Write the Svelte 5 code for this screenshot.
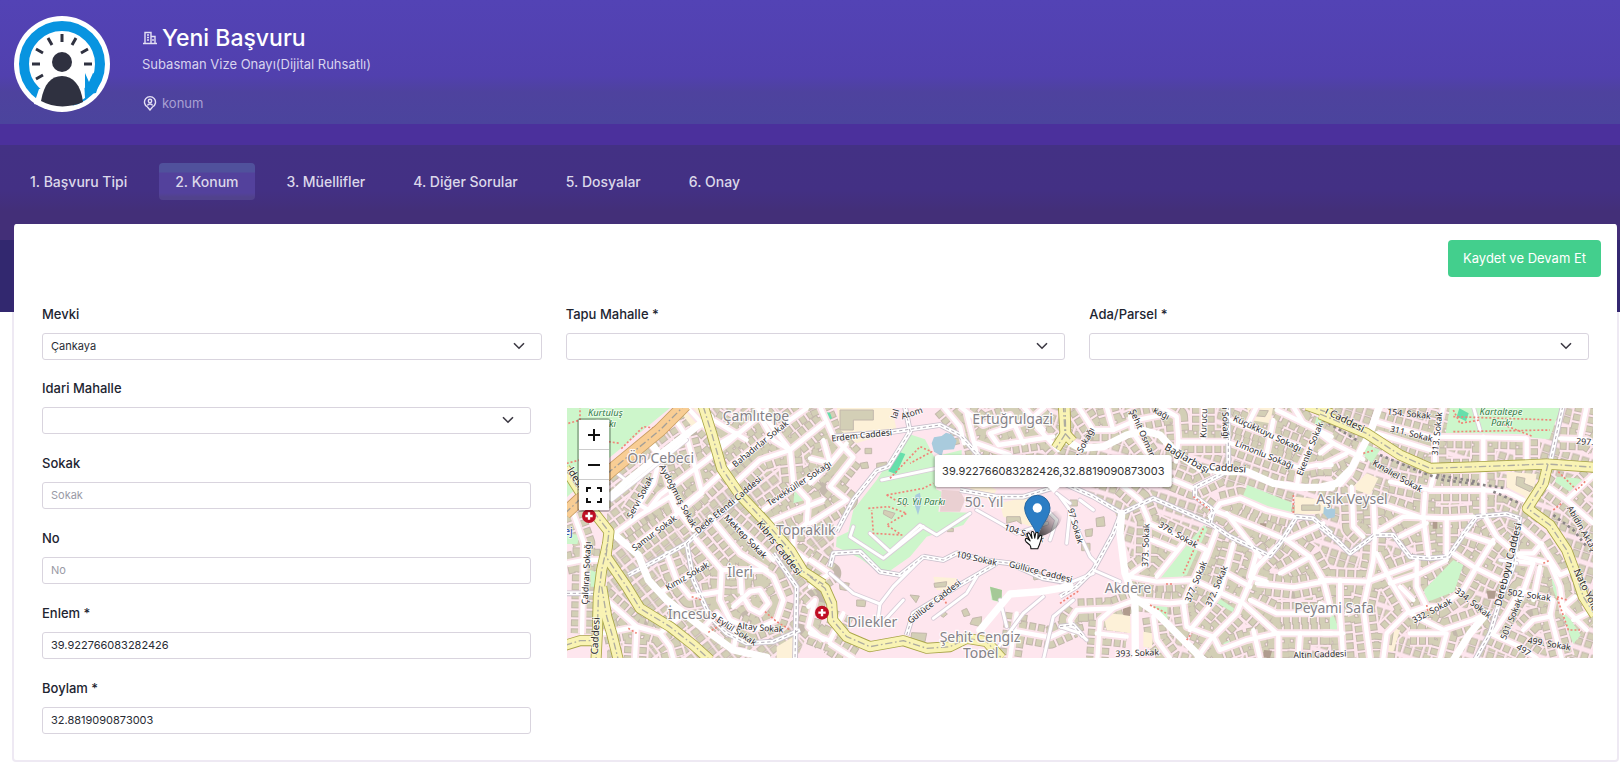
<script lang="ts">
  const tabs = ['1. Başvuru Tipi', '2. Konum', '3. Müellifler', '4. Diğer Sorular', '5. Dosyalar', '6. Onay'];
  let activeTab = $state(1);

  let lat = $state('39.922766083282426');
  let lng = $state('32.8819090873003');
  let street = $state('');
  let doorNo = $state('');

  const topFields = [
    { id: 'mevki', label: 'Mevki', value: 'Çankaya' },
    { id: 'tapu', label: 'Tapu Mahalle *', value: '' },
    { id: 'ada', label: 'Ada/Parsel *', value: '' }
  ];

  type Label = [text: string, x: number, y: number, angle: number];
  type Tile = {
    x: number;
    parks: string[];
    sand: string[];
    streets: string[];
    lanes: string[];
    avenues: string[];
    main: string[];
    dashed: string[];
    trails: string[];
    names: Label[];
    roads: Label[];
    places: Label[];
  };

  // the map is kept as vertical slices, three units to a pixel
  const tiles: Tile[] = [
    {
      x: -21,
      parks: ['20,20 335,20 150,172 20,292', '712,255 735,300 700,310 705,262', '90,510 120,520 115,560 92,560', '20,400 60,405 52,432 20,432'],
      sand: ['375,20 430,20 445,60 400,85 372,50', '650,740 700,710 700,775 650,775'],
      streets: [
        '340,50 380,110 425,275', '350,335 430,270 490,215 560,160 690,60 740,25', '610,330 720,250 780,215',
        '530,245 600,180 690,150 790,70', '600,50 640,120 690,150 700,250 745,300 740,370 700,400 700,450 740,480',
        '450,350 540,460 620,510', '400,410 485,510', '320,460 350,540 390,590 480,575', '305,575 370,535 440,490',
        '485,510 480,600 510,660 580,690 650,660 670,600 640,530 610,510 485,510',
        '520,620 570,575 600,570 625,610 600,640 570,625 555,600', '540,510 545,580', '130,590 230,680 300,700 330,740 340,775',
        '20,490 70,480 130,480', '40,340 72,430 66,700', '130,700 230,680 225,775', '300,170 280,250 215,345',
        '240,315 265,330 300,285 440,180 560,80 620,30', '310,200 345,320 400,390', '165,400 240,345 330,290 350,335',
        '620,370 690,340 790,300', '220,440 340,350 425,280', '380,20 480,130 530,100', '590,20 690,150',
        '430,685 470,640 530,700 520,750', '500,350 600,440 640,480', '460,60 560,120', '300,700 360,650', '745,620 765,600 745,680 790,720'
      ],
      lanes: ['165,215 210,250', '155,300 250,225 380,120'],
      avenues: ['265,120 300,165', '450,50 390,95 300,165 200,245 150,290', '165,405 235,465 265,540 320,600 430,685 520,750 620,772'],
      main: [
        '430,20 455,100 485,205 540,285 620,370 690,450 730,515 790,553',
        '100,335 147,395 138,470 200,560 240,625 330,680 400,735 450,780',
        '143,430 125,510 115,590 112,700 108,780', '125,560 140,650 155,700 175,780', '15,736 60,722 112,722', '15,205 60,275'
      ],
      dashed: ['205,525 300,475 380,430 450,365 560,280', '380,430 400,540 450,650 500,700 560,730 640,725 720,690', '640,460 710,560 705,775', '20,580 130,580'],
      trails: ['20,190 60,180 110,120 180,130', '330,90 250,80 180,150', '25,70 60,60 60,20', '445,650 490,670 440,700', '615,635 650,665 690,690', '395,590 425,600', '205,685 230,700'],
      names: [
        ['Bahadırlar Sokak', 606, 138, -39], ['Tevekküller Sokağı', 722, 258, -33], ['Servi Sokak', 248, 296, -62],
        ['Aydoğmuş Sokak', 346, 292, 62], ['Samur Sokak', 288, 406, -37], ['Dede Efendi Caddesi', 510, 322, -40],
        ['Mektep Sokak', 550, 416, 46], ['Kımız Sokak', 386, 536, -30], ['Altay Sokak', 600, 692, 5],
        ['9 Eylül Sokak', 516, 695, 33], ['Çaldıran Sokağı', 88, 520, -87]
      ],
      roads: [['Kıbrıs Caddesi', 650, 450, 52], ['Caddesi', 116, 708, -87], ['ldesi', 38, 238, 58]],
      places: [['Ön Cebeci', 302, 188, 0], ['Çamlıtepe', 588, 63, 0], ['İleri', 540, 530, 0], ['İncesu', 388, 658, 0]]
    },
    {
      x: 729,
      parks: [
        '290,100 345,118 372,170 455,150 455,172 378,180 378,268 395,275 385,335 487,338 460,375 350,410 300,470 240,512 205,515 150,475 78,440 80,412 115,395 130,330 200,240',
        '540,560 575,570 575,608 545,600'
      ],
      sand: ['80,20 245,20 260,90 140,130 90,90', '570,310 650,290 720,340 690,390 580,350', '370,530 440,535 430,575 380,570', '500,240 560,270 540,300 470,280'],
      streets: [
        '30,20 70,110 130,172 60,260 110,300 0,370', '0,175 60,190 110,130', '400,20 450,80 462,130', '450,20 520,75 600,45 640,130',
        '705,20 660,60 540,100 565,135 730,110', '680,80 745,150', '0,700 60,722 100,640', '0,480 60,520 0,560',
        '600,690 720,712 790,680', '620,640 600,775', '500,130 600,165', '0,250 60,190 40,120', '130,775 60,730', '640,20 700,90', '470,40 500,160'
      ],
      lanes: [
        '60,520 130,580 210,612 250,560 340,470', '210,612 205,650', '280,600 220,665', '370,655 470,580 500,530',
        '700,780 730,650 790,600', '500,330 580,375 620,400 710,370', '740,280 780,310', '570,600 590,680', '720,420 740,360 700,320',
        '180,400 240,455 330,375 380,405 480,340', '215,240 380,205', '130,380 120,410 220,475 340,380', '540,775 640,640 700,590'
      ],
      avenues: ['510,690 600,582 690,575 780,560'],
      main: ['0,530 45,565 65,610 68,660 110,710 180,740 280,722 350,745 420,740 470,715 530,725 575,775', '765,15 767,100 738,145'],
      dashed: [
        '70,110 250,95 390,75 450,105 500,160 540,200', '80,395 130,300 200,212 235,200 300,95 285,20',
        '340,470 400,480 440,460 520,480 600,490 700,535 790,550', '290,705 310,640 440,560 560,490',
        '60,500 70,460 150,455 210,515 270,525 340,470', '450,270 560,290 640,290 740,260'
      ],
      trails: ['240,235 330,140 365,155 300,190', '230,285 340,265 370,250', '175,325 235,320 290,340 230,375 275,405 190,400 185,330', '230,285 290,320', '400,595 412,615'],
      names: [
        ['Erdem Caddesi', 156, 115, -6], ['Atom', 308, 48, -18], ['104 Sokak', 640, 408, 18],
        ['109 Sokak', 498, 484, 12], ['Güllüce Caddesi', 690, 524, 14], ['Güllüce Caddesi', 378, 612, -38], ['lal', 264, 44, -75]
      ],
      roads: [],
      places: [['Topraklık', -13, 406, 0], ['50. Yıl', 522, 322, 0], ['Ertuğrulgazi', 608, 71, 0], ['Dilekler', 187, 680, 0], ['Şehit Cengiz', 510, 725, 0], ['Topel', 512, 774, 0]]
    },
    {
      x: 1479,
      parks: ['562,255 695,308 693,350 548,290', '432,375 442,388 380,525 300,552 285,545', '270,612 322,615 322,665', '470,590 522,625 518,637 465,605', '770,50 785,60 780,90 762,80', '490,730 510,720 500,745'],
      sand: ['130,640 210,645 212,700 140,690', '560,20 640,20 630,70 570,60', '705,290 800,300 800,340 705,345', '250,695 280,700 275,745 250,740'],
      streets: [
        '55,20 100,90 160,90 230,60 330,40', '140,20 160,90', '210,50 220,100 270,170', '300,20 350,50 355,120 348,185',
        '355,125 500,125 610,165 720,205 770,195 815,195', '430,20 430,120', '510,60 560,80 720,140', '650,30 815,110', '640,60 620,160',
        '780,80 720,200 710,260', '185,255 240,300 265,360 260,490 210,525', '265,370 330,400 440,450 410,520 370,610 380,680 460,710',
        '275,420 350,450', '370,430 290,530', '210,530 290,545 400,540 550,610 650,700 815,700', '230,600 330,610 380,605',
        '470,390 440,470 400,550', '520,430 480,580 390,690', '650,440 590,500 530,640 450,720 410,775', '590,460 570,530 620,545',
        '450,350 480,310 540,295 620,330 700,350', '460,330 560,370 680,420 750,470 790,540 810,620', '680,420 790,370',
        '40,700 30,660 50,630 160,625 225,600', '160,625 120,660 112,775', '110,700 200,710', '570,600 650,640 815,640',
        '590,550 700,562 815,540', '655,700 655,775', '720,700 715,775', '580,690 600,775', '460,710 480,750 560,720 650,700',
        '340,240 400,265 480,225', '500,520 570,560', '280,650 290,720 330,775', '500,340 600,470', '750,470 660,520', '700,20 730,70', '590,20 560,80'
      ],
      lanes: ['0,290 30,330 20,430', '60,300 100,330', '30,340 90,470 110,490', '100,510 180,545', '0,680 60,700 80,720', '0,560 100,520'],
      avenues: [
        '0,110 60,145 130,140 200,105 250,92 300,105 350,160 420,205 500,215 560,215 640,250 720,262 815,262',
        '185,340 180,400 195,520 225,600 226,780', '225,595 290,640 410,760 430,780'
      ],
      main: ['10,15 15,100 38,125', '740,15 815,42'],
      dashed: [
        '0,245 100,290 185,340 280,295 360,330 450,370 510,410 630,468 660,430 710,350 760,355 815,400',
        '185,335 160,400 100,510 50,560 0,590', '450,370 460,330 405,290 405,262 500,215', '505,20 505,200', '0,680 40,675 70,710'
      ],
      trails: ['430,385 370,520', '400,290 450,330', '700,285 700,345', '318,552 342,552', '380,720 395,700', '0,610 60,570', '270,615 320,640'],
      names: [
        ['Küçükkuyu Sokağı', 618, 108, 25], ['Limonlu Sokağı', 610, 172, 22], ['Ekenler Sokak', 758, 150, -68],
        ['Kurucu', 440, 70, -88], ['ı Sokağı', 488, 70, 88], ['Şehit Osman', 240, 104, 66], ['ı Sokağı', 82, 130, -62],
        ['376. Sokak', 350, 412, 30], ['373. Sokak', 266, 436, -88], ['377. Sokak', 416, 548, -67],
        ['372. Sokak', 478, 562, -67], ['97 Sokak', 38, 380, 74], ['393. Sokak', 232, 768, -2], ['kağı', 300, 48, 28],
        ['Altın Caddesi', 780, 772, -2]
      ],
      roads: [['Bağlarbaşı', 376, 184, 30], ['Caddesi', 502, 214, 4]],
      places: [['Akdere', 204, 580, 0], ['Peyami Safa', 822, 640, 0], ['Aşık Veysel', 876, 311, 0]]
    },
    {
      x: 2259,
      parks: [
        '390,20 722,20 688,118 600,110 375,110', '400,480 430,495 402,575 320,607 312,570',
        '688,490 715,530 740,640 782,705 760,732 700,570', '710,230 770,235 805,245 750,275 705,245',
        '130,130 180,150 155,190 130,165', '40,645 62,700 30,690 30,650'
      ],
      sand: ['560,215 650,222 640,280 620,300 560,262', '140,220 175,235 150,285 95,265', '205,680 240,690 220,755 190,750'],
      streets: [
        '130,130 90,220 60,255', '170,65 220,80 330,110 500,112 620,115 620,180', '330,270 345,210 345,130 370,20',
        '210,245 330,270 480,270 560,275 610,300', '310,350 315,280', '40,130 100,160 130,178', '0,200 80,160', '95,260 100,380 130,410',
        '160,300 165,400 160,480 130,620 150,775', '165,400 250,350 380,355 460,350', '490,110 490,340 530,410 600,470 690,490 720,560 730,640',
        '310,350 325,470', '380,355 380,470', '150,300 310,355', '0,540 140,545 290,490', '170,460 210,540 270,640 370,690 460,660 500,640',
        '210,550 300,520 380,480', '290,480 290,560 320,620 260,640 200,700 190,775', '400,460 460,500 560,550',
        '520,420 470,500 430,570 360,620 320,620', '560,480 640,490 600,600', '660,500 640,600', '520,700 560,640 600,570 700,600',
        '600,380 660,430 720,525 755,510', '600,460 640,460 665,430', '670,250 740,300 820,370', '740,300 820,225', '720,115 800,118 825,135',
        '800,20 780,115', '700,600 690,650 640,660 610,690', '690,640 725,775', '510,700 600,740 650,775', '60,540 60,640 70,775',
        '270,700 380,700 360,775', '765,590 730,620 800,690', '820,630 760,660', '430,400 520,430', '240,410 320,370', '80,640 130,620',
        '0,610 60,640', '240,560 280,600', '0,100 40,130 0,160', '170,100 330,150', '345,210 490,210', '10,700 70,700'
      ],
      lanes: ['540,480 590,490', '460,20 480,90'],
      avenues: ['0,262 50,250 95,205 150,100 178,20', '500,640 450,700 400,780'],
      main: ['0,42 140,100 240,165 330,205 480,200 680,192 825,202', '684,192 670,250 622,325 690,375 740,450 770,530 790,590 825,645'],
      dashed: [
        '0,380 50,420 90,460 165,405 220,405 270,470 330,475 385,470 440,390 470,350 560,342 600,355',
        '600,350 580,500 540,600 510,700 465,780', '728,20 690,190'
      ],
      trails: ['400,50 700,60', '400,95 690,90', '540,70 640,110', '715,215 770,270 800,240', '700,330 725,310', '670,490 690,480', '740,600 710,590 745,690 780,690', '320,615 325,640', '130,160 165,150', '400,30 420,70 480,60'],
      names: [
        ['154. Sokak', 266, 50, 6], ['311. Sokak', 272, 110, 14], ['313. Sokak', 360, 102, -84],
        ['Kınalıel Sokak', 228, 236, 30], ['297.', 794, 134, 4], ['Abidin Aktaş', 778, 390, 60],
        ['502. Sokak', 626, 594, 8], ['501. Sokak', 582, 660, -68], ['499. Sokak', 686, 740, 10],
        ['497', 606, 758, 32], ['332. Sokak', 340, 640, -28], ['334. Sokak', 454, 616, 38]
      ],
      roads: [['ı Caddesi', 70, 68, 27], ['Nato Yolu', 790, 574, 64], ['Dereboyu Caddesi', 574, 496, -76]],
      places: []
    }
  ];
</script>

{#snippet chevron()}
  <svg class="chevron" viewBox="0 0 12 8" aria-hidden="true"><path d="M1 1.2 6 6.2 11 1.2" /></svg>
{/snippet}

{#snippet lines(key: 'streets' | 'lanes' | 'avenues' | 'main' | 'dashed' | 'trails', cls: string)}
  {#each tiles as t}
    <g class={cls} transform="translate({t.x} -24)">
      {#each t[key] as points}<polyline {points} />{/each}
    </g>
  {/each}
{/snippet}

{#snippet labels(key: 'names' | 'roads' | 'places', cls: string)}
  {#each tiles as t}
    <g class={cls} transform="translate({t.x} -24)">
      {#each t[key] as [text, x, y, angle]}
        <text transform="translate({x} {y}) rotate({angle})">{text}</text>
      {/each}
    </g>
  {/each}
{/snippet}

<div class="page">
  <header class="hero">
    <svg class="logo" viewBox="0 0 96 96" aria-hidden="true">
      <circle cx="48" cy="48" r="48" fill="#fff" />
      <circle cx="48" cy="48" r="38" fill="none" stroke="#0894e0" stroke-width="10" />
      <path d="M25 73 20 88 52 94 71 82 70 64Z" fill="#fff" />
      <path d="M71 57 75 66 79 57 87 62 82 77 71 79Z" fill="#0894e0" />
      <g stroke="#2f3140" stroke-width="3">
        <path d="M48 18v8M34 22l4 7M62 22l-4 7M22 33l7 4M74 33l-7 4M18 48h8M70 48h8M22 63l7-4" />
      </g>
      <circle cx="48" cy="46" r="10" fill="#2f3140" />
      <path d="M27 85C30 68 37 60 48 60s19 9 21 26C56 92 39 92 27 85Z" fill="#2f3140" />
    </svg>
    <div class="heading">
      <h1>
        <svg class="icon" viewBox="0 0 16 16" aria-hidden="true">
          <path d="M1 13.5h14M3 13V2.500h6V13M9 6.500h4V13M5 5h2M5 7.500h2M5 10h2M11 9v2" />
        </svg>
        Yeni Başvuru
      </h1>
      <p class="sub">Subasman Vize Onayı(Dijital Ruhsatlı)</p>
      <p class="place">
        <svg class="icon" viewBox="0 0 16 16" aria-hidden="true">
          <path d="M8 15 5.500 12A5.500 5.500 0 1 1 10.500 12ZM5.500 10.500C6 8.500 10 8.500 10.500 10.500" />
          <circle cx="8" cy="6" r="1.700" />
        </svg>
        konum
      </p>
    </div>
  </header>

  <nav class="tabs" aria-label="Başvuru adımları">
    {#each tabs as tab, i}
      <button class="tab" class:active={activeTab === i} onclick={() => (activeTab = i)}>{tab}</button>
    {/each}
  </nav>

  <main class="card">
    <div class="actions">
      <button class="save">Kaydet ve Devam Et</button>
    </div>

    <div class="row-top">
      {#each topFields as f}
        <div class="field">
          <label for={f.id}>{f.label}</label>
          <div class="select">
            <select id={f.id}><option>{f.value}</option></select>
            {@render chevron()}
          </div>
        </div>
      {/each}
    </div>

    <div class="row-main">
      <div class="fields">
        <div class="field">
          <label for="idari">Idari Mahalle</label>
          <div class="select">
            <select id="idari"><option></option></select>
            {@render chevron()}
          </div>
        </div>
        <div class="field">
          <label for="sokak">Sokak</label>
          <input id="sokak" type="text" placeholder="Sokak" bind:value={street} />
        </div>
        <div class="field">
          <label for="no">No</label>
          <input id="no" type="text" placeholder="No" bind:value={doorNo} />
        </div>
        <div class="field">
          <label for="enlem">Enlem *</label>
          <input id="enlem" type="text" bind:value={lat} />
        </div>
        <div class="field">
          <label for="boylam">Boylam *</label>
          <input id="boylam" type="text" bind:value={lng} />
        </div>
      </div>

      <div class="map">
        <svg class="map-canvas" viewBox="0 0 3078 750" preserveAspectRatio="xMidYMid slice" aria-label="Harita">
          <defs>
            <pattern id="houses" width="31" height="54" patternUnits="userSpaceOnUse" patternTransform="rotate(-38)">
              <rect x="3" y="2" width="22" height="20" />
              <rect x="3" y="26" width="22" height="18" />
            </pattern>
            <pattern id="houses-east" width="30" height="62" patternUnits="userSpaceOnUse" patternTransform="rotate(18)">
              <rect x="3" y="3" width="20" height="20" />
              <rect x="3" y="28" width="20" height="19" />
            </pattern>
            <linearGradient id="shadow" x1="0" y1="1" x2="1" y2="0">
              <stop offset="0" stop-color="#000" stop-opacity="0.75" />
              <stop offset="0.9" stop-color="#000" stop-opacity="0" />
            </linearGradient>
          </defs>
          <rect width="3078" height="750" fill="#fee6ee" />
          <path d="M120 180 330 0H800V500L690 750H120Z" fill="url(#houses)" />
          <path d="M1180 0H3078V750H1790L1640 300 1500 230 1250 130Z" fill="url(#houses-east)" />

          {@render lines('streets', 'plot')}
          {@render lines('streets', 'house-edge')}
          {@render lines('streets', 'house')}

          {#each tiles as t}
            <g transform="translate({t.x} -24)">
              {#each t.sand as points}<polygon class="sand" {points} />{/each}
              {#each t.parks as points}<polygon class="park" {points} />{/each}
            </g>
          {/each}

          <!-- park details around 50. Yıl -->
          <g transform="translate(729 -24)">
            <path class="pitch" d="M265 155 286 162 258 222 235 214ZM38 35 60 38 66 55 50 62Z" />
            <path class="water" d="M365 130 372 112 395 108 408 98 425 103 440 122 432 148 400 150 395 168 372 155ZM316 285 330 278 334 310 324 345 315 318Z" />
            <path class="court" d="M395 270 450 272 465 300 450 335 390 335Z" />
            <path class="block" d="M90 30H190V60H130V90H90ZM222 330 255 340 245 356 220 342ZM412 385h18v10h-18ZM165 145h20v16h-20ZM88 545 118 550 112 572 90 568ZM300 585 328 588 318 608ZM140 600 168 600 165 620 140 618ZM372 550 410 545 408 560 374 562ZM590 350 630 350 634 372 620 362 590 370ZM488 655 515 650 512 680 480 672ZM305 698 350 700 345 725 302 720ZM385 642 400 632 412 642 400 652ZM455 632 470 625 480 645 462 650ZM668 520 690 515 696 535 672 540ZM200 190 230 186 225 205 200 205ZM150 190 172 186 176 204 155 206Z" />
            <path class="wood" d="M540 560 576 570 574 606 548 600Z" />
          </g>
          <g transform="translate(1479 -24)">
            <path class="block" d="M58 200 75 190 85 205 70 218ZM95 235 120 240 115 262 92 258ZM30 300h22v18h-22ZM108 355 132 350 135 378 110 380ZM65 430h25v22h-25ZM75 390 98 386 96 408 78 410ZM55 640h30v24h-30ZM725 315h55v16h-55ZM570 30 625 32 615 50 570 46Z" />
            <path class="dark" d="M188 625 212 620 210 648 190 645ZM612 750 636 752 630 775 608 772ZM600 370h18v16h-18ZM475 572h16v16h-16Z" />
          </g>
          <g transform="translate(2259 -24)">
            <path class="pitch" d="M418 25 446 40 438 64 410 50Z" />
            <path class="water" d="M12 320 46 328 44 352 24 356 10 340Z" />
            <path class="block" d="M590 230 615 235 612 250 640 262 630 275 588 255ZM205 700 220 695 214 735 200 730Z" />
            <path class="dark" d="M500 572 528 572 524 596 504 596ZM338 364h14v22h-14Z" />
          </g>

          {@render lines('streets', 'verge')}
          {@render lines('dashed', 'path-edge')}
          {@render lines('streets', 'street')}
          {@render lines('lanes', 'lane-edge')}
          {@render lines('lanes', 'lane')}
          {@render lines('dashed', 'path')}
          {@render lines('dashed', 'path-dash')}
          {@render lines('avenues', 'avenue')}
          {@render lines('trails', 'trail')}

          <g class="avenue-dots" transform="translate(2259 -24)">
            <path d="M10 60 110 120M180 165 300 215 370 240 490 255 560 265M520 275 600 310M700 345 760 390 800 440M350 225 470 245" />
          </g>

          <g transform="translate(-21 -24)" fill="none">
            <path d="M15 340 150 214 300 90 375 15" stroke="#c79d62" stroke-width="41" />
            <path d="M15 340 150 214 300 90 375 15" stroke="#f8cd94" stroke-width="36" />
            <path d="M15 340 150 214 300 90 375 15" stroke="#a39f98" stroke-width="4" stroke-dasharray="22 8 5 8" />
          </g>
          {@render lines('main', 'main-edge')}
          {@render lines('main', 'main-road')}
          {@render lines('main', 'main-dash')}

          {@render labels('names', 'street-name')}
          {@render labels('roads', 'road-name')}
          {@render labels('places', 'place-name')}
          <g class="park-name">
            <text x="115" y="24">Kurtuluş</text>
            <text x="115" y="58">Parkı</text>
            <text x="1062" y="291">50. Yıl Parkı</text>
            <text x="2802" y="22">Kartaltepe</text>
            <text x="2804" y="54">Parkı</text>
          </g>
          <text class="stop-name" x="4" y="382">ej</text>

          {#each [[66, 324], [765, 614]] as [x, y]}
            <g transform="translate({x} {y})">
              <circle r="21" fill="#bf0f24" />
              <path d="M-11 0H11M0-11V11" stroke="#fff" stroke-width="7" />
            </g>
          {/each}

          <!-- marker with its shadow and the grab cursor -->
          <g transform="translate(1411 264)">
            <path d="M2 120C16 80 34 48 60 42 84 44 76 84 46 104 30 116 14 122 2 120Z" fill="url(#shadow)" />
            <path d="M0 122C-6 92-38 66-38 36A38 38 0 0 1 38 36C38 66 6 92 0 122Z" fill="#2b7dc4" stroke="#2767a0" stroke-width="3" />
            <circle cy="36" r="14" fill="#fff" />
          </g>
          <g transform="translate(1373 370) scale(0.82)">
            <path
              d="M19 50 5 38C-2 30 5 22 12 28L20 35 10 14C8 5 16 3 19 10L27 26 24 7C24-1 33-1 34 6L37 25 40 8C42 1 50 3 49 10L48 28 54 18C58 12 65 16 62 23L56 42C54 52 50 56 48 64H23C23 58 23 55 19 50Z"
              fill="#fff" stroke="#111" stroke-width="4" stroke-linejoin="round"
            />
          </g>
        </svg>

        <div class="zoom">
          <button aria-label="Yakınlaştır"><svg viewBox="0 0 18 18"><path d="M9 3v12M3 9h12" /></svg></button>
          <button aria-label="Uzaklaştır"><svg viewBox="0 0 18 18"><path d="M3 9h12" /></svg></button>
          <button aria-label="Tam ekran">
            <svg viewBox="0 0 18 18"><path d="M2 6V2h4M12 2h4v4M16 12v4h-4M6 16H2v-4" /></svg>
          </button>
        </div>
        <div class="tooltip">{lat},{lng}</div>
      </div>
    </div>
  </main>
</div>

<style>
  :global(body) {
    background: #fff;
    color: #212430;
    font-family: Inter, 'Liberation Sans', sans-serif;
    font-size: 13px;
  }

  .page {
    padding: 16px 3px 0 14px;
    background: linear-gradient(
        #5343b5 0,
        #5140ae 76px,
        #4e429e 92px,
        #4b449d 124px,
        #4b309c 124px,
        #4b309c 145px,
        #433184 145px,
        #433084 190px,
        #432f78 212px,
        #432f78 240px,
        #32286f 240px,
        #32286f 312px
      )
      no-repeat;
    background-size: 100% 312px;
  }

  .hero {
    display: flex;
    gap: 32px;
  }

  .logo {
    width: 96px;
    height: 96px;
    flex-shrink: 0;
  }

  .heading {
    padding-top: 6px;
  }

  h1 {
    display: flex;
    align-items: center;
    gap: 4px;
    margin: 0;
    color: #fff;
    font-size: 23px;
    font-weight: 500;
    line-height: 32px;
  }

  .icon {
    width: 16px;
    height: 16px;
    fill: none;
    stroke: #e4e0f4;
    stroke-width: 1.4;
  }

  .sub,
  .place {
    margin: 0;
    color: #d8d3ee;
    font-size: 13px;
    line-height: 20px;
  }

  .place {
    display: flex;
    align-items: center;
    gap: 4px;
    margin-top: 19px;
    color: #a9a0d3;
  }

  .tabs {
    display: flex;
    gap: 16px;
    margin: 50px 0 24px;
  }

  .tab {
    padding: 8px 16px;
    border: none;
    border-radius: 4px;
    background: none;
    color: #dcd8ea;
    font: 500 14px/21px Inter, sans-serif;
    cursor: pointer;
  }

  .tab.active {
    background: linear-gradient(#50519c 0, #50519c 9px, #53419c 10px, #53419c 30px, #51428c 34px);
  }

  .card {
    margin: 0 -2px;
    padding-bottom: 26px;
    border: 2px solid rgba(90, 40, 140, 0.1);
    border-top: none;
    border-radius: 4px;
    background: #fff;
    background-clip: padding-box;
  }

  .actions {
    display: flex;
    justify-content: flex-end;
    padding: 16px 16px 27px;
  }

  .save {
    padding: 8px 15px;
    border: none;
    border-radius: 4px;
    background: #43cf8d;
    color: #fff;
    font: 13px/21px Inter, sans-serif;
    cursor: pointer;
  }

  .row-top {
    display: grid;
    grid-template-columns: repeat(3, 1fr);
    gap: 24px;
    margin: 0 28px 18px;
  }

  .row-main {
    display: grid;
    grid-template-columns: 489fr 1026fr;
    gap: 36px;
    margin: 0 24px 0 28px;
  }

  .fields {
    display: flex;
    flex-direction: column;
    gap: 19px;
  }

  .field label {
    display: block;
    margin-bottom: 9px;
    font-weight: 500;
    line-height: 20px;
  }

  .select {
    position: relative;
  }

  .field input,
  .field select {
    display: block;
    box-sizing: border-box;
    width: 100%;
    height: 27px;
    padding: 0 8px 2px;
    border: 1px solid #d9d4de;
    border-radius: 3px;
    background: #fff;
    color: #282b34;
    font: 11px Inter, sans-serif;
    appearance: none;
  }

  .field input::placeholder {
    color: #9a9aa6;
  }

  .chevron {
    position: absolute;
    right: 17px;
    top: 9px;
    width: 12px;
    height: 8px;
    fill: none;
    stroke: #3b3842;
    stroke-width: 1.6;
    pointer-events: none;
  }

  .map {
    position: relative;
    height: 250px;
    margin-top: 30px;
    overflow: hidden;
  }

  .map-canvas {
    display: block;
    width: 100%;
    height: 100%;
  }

  .map-canvas polyline {
    fill: none;
    stroke-linejoin: round;
  }

  pattern rect,
  .block {
    fill: #d3cfb6;
    stroke: #c3b8ac;
    stroke-width: 3;
  }

  .plot { stroke: #fee6ee; stroke-width: 80; }
  .house-edge { stroke: #c3b8ac; stroke-width: 68; stroke-dasharray: 21 6; }
  .house { stroke: #d3cfb6; stroke-width: 62; stroke-dasharray: 15 12; stroke-dashoffset: -3; }
  .verge { stroke: #fbe3ea; stroke-width: 24; }
  .street { stroke: #fff; stroke-width: 13; stroke-linecap: round; }
  .lane-edge { stroke: #d9ccd8; stroke-width: 14; stroke-linecap: round; }
  .lane { stroke: #fff; stroke-width: 9; stroke-linecap: round; }
  .path-edge { stroke: #c9c0cc; stroke-width: 17; }
  .path { stroke: #fff; stroke-width: 12; }
  .path-dash { stroke: #b3adb8; stroke-width: 3; stroke-dasharray: 10 8; }
  .avenue { stroke: #fff; stroke-width: 22; stroke-linecap: round; }
  .trail { stroke: #f08478; stroke-width: 5; stroke-dasharray: 6 6; }
  .main-edge { stroke: #a9a548; stroke-width: 33; }
  .main-road { stroke: #f9f3b4; stroke-width: 28; }
  .main-dash { stroke: #aeaca0; stroke-width: 4; stroke-dasharray: 22 8 5 8; }
  .avenue-dots { fill: none; stroke: #8a8486; stroke-width: 8; stroke-dasharray: 8 10; }

  .park { fill: #cdf6cb; }
  .sand { fill: #fdf1d8; }
  .pitch { fill: #66dfab; }
  .water { fill: #a9cbdd; }
  .court { fill: #ead0d2; }
  .wood { fill: #a5c997; }
  .dark { fill: #b09c8e; }

  .map-canvas text {
    font-family: 'Noto Sans', sans-serif;
    text-anchor: middle;
    paint-order: stroke;
    stroke: #fff;
    stroke-opacity: 0.7;
    stroke-width: 5;
  }

  .street-name {
    fill: #2c2a2c;
    font-size: 26px;
  }

  .road-name {
    fill: #2c2a2c;
    font-size: 30px;
  }

  .place-name {
    fill: #858288;
    font-size: 42px;
  }

  .place-name text {
    stroke-opacity: 0.9;
    stroke-width: 7;
  }

  .park-name {
    fill: #2f7b45;
    font-size: 28px;
    font-style: italic;
  }

  .stop-name {
    fill: #2c49a8;
    font-size: 32px;
  }

  .zoom {
    position: absolute;
    top: 10px;
    left: 10px;
    display: flex;
    flex-direction: column;
    border: 2px solid rgba(0, 0, 0, 0.25);
    border-radius: 4px;
    background-clip: padding-box;
  }

  .zoom button {
    display: grid;
    place-items: center;
    width: 30px;
    height: 30px;
    padding: 0;
    border: none;
    border-bottom: 1px solid #ccc;
    background: #fff;
    cursor: pointer;
  }

  .zoom button:last-child {
    border-bottom: none;
  }

  .zoom svg {
    width: 18px;
    height: 18px;
    fill: none;
    stroke: #111;
    stroke-width: 2;
  }

  .tooltip {
    position: absolute;
    top: 47px;
    left: 47.4%;
    transform: translateX(-50%);
    padding: 7px;
    border-radius: 3px;
    background: #fff;
    box-shadow: 0 1px 3px rgba(0, 0, 0, 0.4);
    color: #333;
    font-size: 11px;
    line-height: 18px;
    white-space: nowrap;
  }

  .tooltip::after {
    content: '';
    position: absolute;
    top: 100%;
    left: 50%;
    margin-left: -6px;
    border: 6px solid transparent;
    border-top-color: #fff;
  }
</style>
